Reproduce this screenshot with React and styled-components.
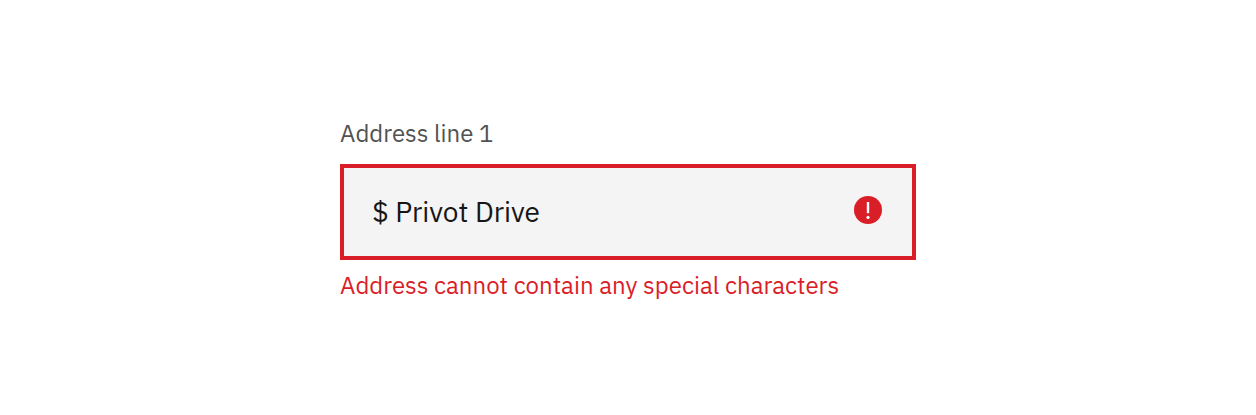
import React from "react";
import styled, { createGlobalStyle } from "styled-components";

const GlobalStyle = createGlobalStyle`
  *, *::before, *::after { box-sizing: border-box; }
  body {
    margin: 0;
    background: #ffffff;
    font-family: "IBM Plex Sans", "Noto Sans", "Open Sans", sans-serif;
    -webkit-font-smoothing: antialiased;
  }
`;

const Page = styled.main`
  display: flex;
  justify-content: center;
  padding: 116px 24px;
`;

const Field = styled.div`
  display: flex;
  flex-direction: column;
  width: 100%;
  max-width: 576px;
`;

const Label = styled.label`
  margin-bottom: 14px;
  color: #525252;
  font-size: 24px;
  line-height: 34px;
`;

const Control = styled.div`
  display: flex;
  align-items: center;
  height: 96px;
  padding: 0 30px 0 28px;
  border: 4px solid #da1e28;
  background: #f4f4f4;
`;

const TextInput = styled.input`
  flex: 1;
  min-width: 0;
  padding: 0;
  border: 0;
  outline: 0;
  background: transparent;
  color: #161616;
  font: inherit;
  font-size: 28px;
  line-height: 36px;
`;

const ErrorIcon = styled.svg`
  flex: none;
  width: 28px;
  height: 28px;
  margin-bottom: 4px;
`;

const ErrorMessage = styled.p`
  margin: 8px 0 0;
  color: #da1e28;
  font-size: 24px;
  line-height: 34px;
`;

export default function App() {
  return (
    <>
      <GlobalStyle />
      <Page>
        <Field>
          <Label htmlFor="address-line-1">Address line 1</Label>
          <Control>
            <TextInput
              id="address-line-1"
              type="text"
              defaultValue="$ Privot Drive"
              aria-invalid="true"
              aria-describedby="address-line-1-error"
            />
            <ErrorIcon viewBox="0 0 28 28" aria-hidden="true">
              <circle cx="14" cy="14" r="14" fill="#da1e28" />
              <path d="M12.8 6h2.4v11.2h-2.4z" fill="#ffffff" />
              <circle cx="14" cy="21.4" r="1.6" fill="#ffffff" />
            </ErrorIcon>
          </Control>
          <ErrorMessage id="address-line-1-error">
            Address cannot contain any special characters
          </ErrorMessage>
        </Field>
      </Page>
    </>
  );
}
